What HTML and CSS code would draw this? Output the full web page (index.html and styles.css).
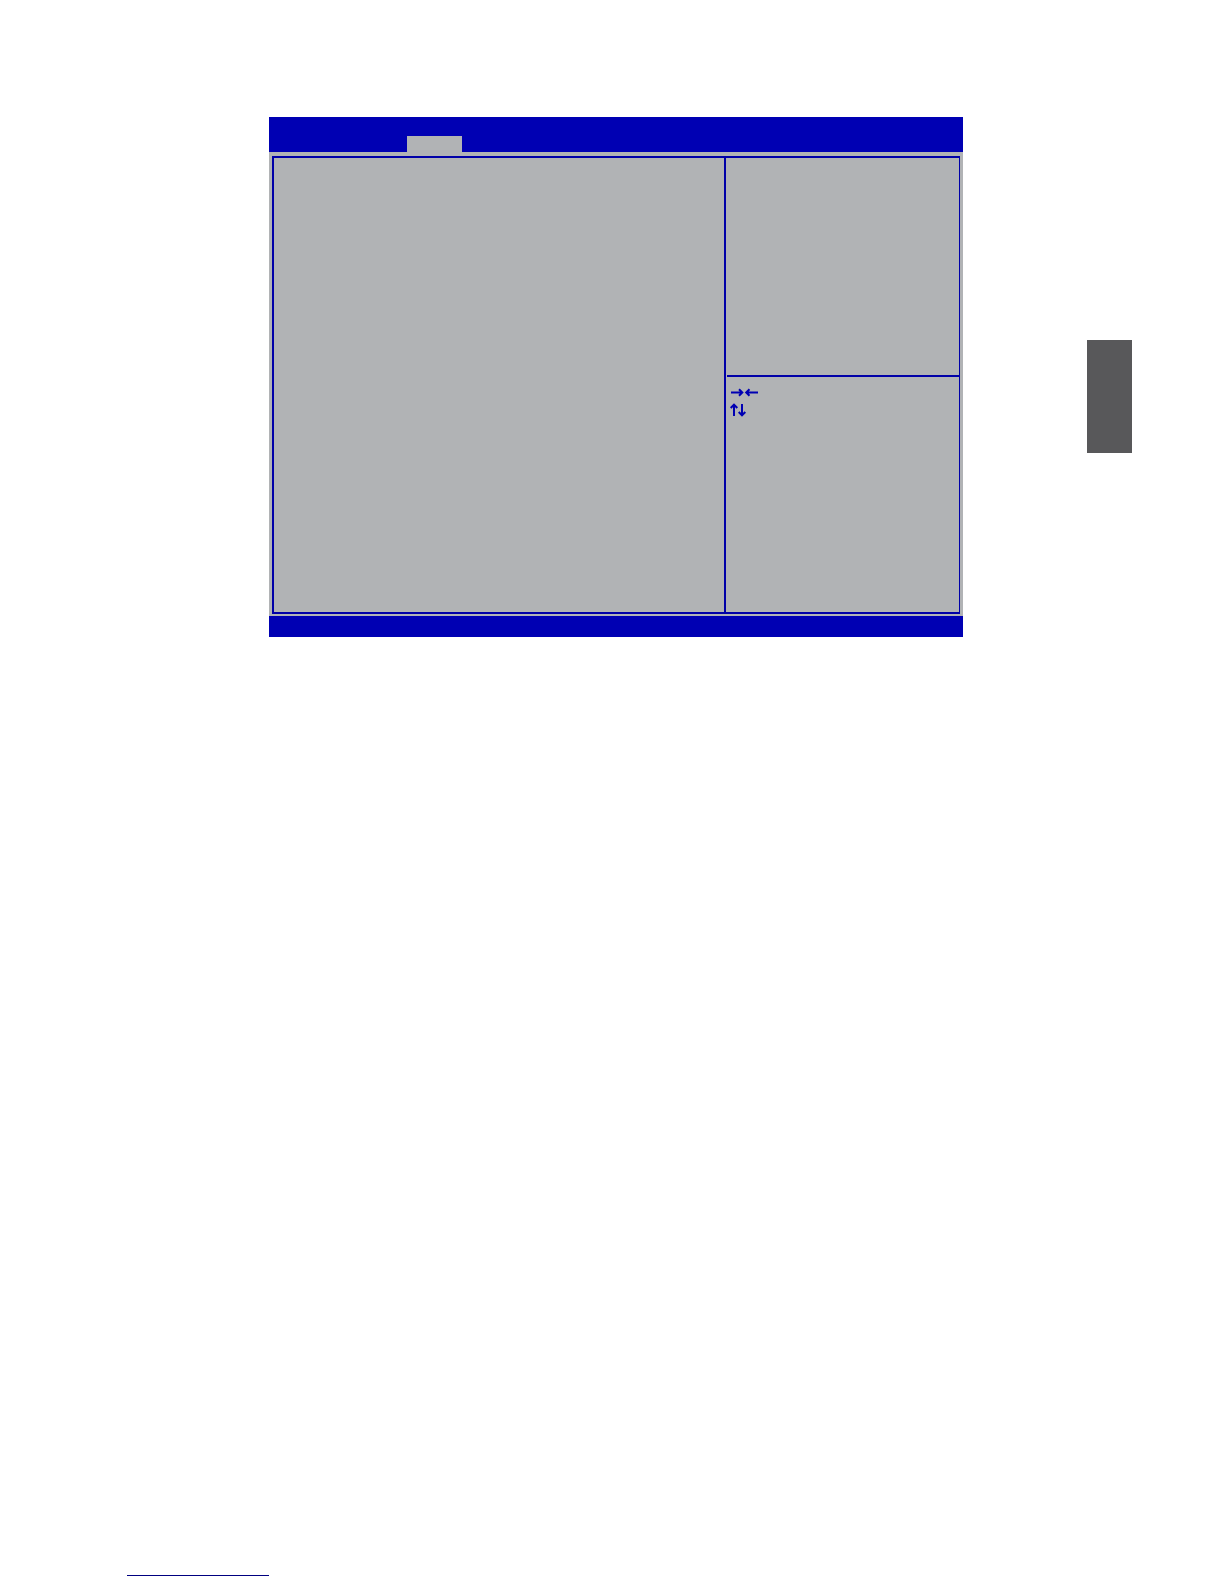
FILE: index.html
```html
<!DOCTYPE html>
<html lang="en">
<head>
<meta charset="utf-8">
<meta name="viewport" content="width=device-width, initial-scale=1">
<title>Setup</title>
<link rel="stylesheet" href="styles.css">
</head>
<body>
<main class="sheet">
  <section class="setup">
    <header class="setup-header"><div class="active-tab"></div></header>
    <div class="setup-body">
      <div class="frame">
        <div class="options"></div>
        <aside class="side">
          <div class="help"></div>
          <div class="keys">
            <svg class="arrows" width="28" height="30" viewBox="0 0 28 30" aria-hidden="true">
              <path d="M0 5.500H11M8 2.200L11.300 5.500L8 8.800M27 5.500H16M18.500 2.200L15.200 5.500L18.500 8.800M3 29V18M-0.300 21L3 17.700L6.300 21M11 17V28M7.700 25L11 28.300L14.300 25"/>
            </svg>
          </div>
        </aside>
      </div>
    </div>
    <footer class="setup-footer"></footer>
  </section>
  <div class="thumb-tab"></div>
</main>
<footer class="sheet-footer"><div class="rule"></div></footer>
</body>
</html>
```
FILE: styles.css
```css
* {
  box-sizing: border-box;
}

body {
  display: flex;
  flex-direction: column;
  min-height: 100vh;
  margin: 0;
  background: #fff;
  font-family: "Liberation Sans", sans-serif;
}

.sheet {
  display: grid;
  grid-template-columns: minmax(0, 1fr) 45px;
  column-gap: 124px;
  align-items: start;
  padding: 117px 92px 0 269px;
}

.setup {
  background: #b1b3b5;
}

.setup-header {
  display: flex;
  align-items: flex-end;
  height: 35px;
  padding-left: 138px;
  background: #0000b3;
}

.active-tab {
  width: 55px;
  height: 16px;
  background: #b1b3b5;
}

.setup-body {
  padding: 4px 3px 2px;
}

.frame {
  display: grid;
  grid-template-columns: minmax(0, 1fr) 235px;
  min-height: 458px;
  border: 2px solid #0000a8;
  border-right-width: 1px;
}

.side {
  display: grid;
  grid-template-rows: 219px 1fr;
  padding-left: 1px;
  border-left: 2px solid #0000a8;
}

.help {
  border-bottom: 2px solid #0000a8;
}

.keys {
  padding: 10px 4px;
}

.arrows {
  display: block;
  overflow: visible;
  fill: none;
  stroke: #0000b3;
  stroke-width: 2;
}

.setup-footer {
  height: 21px;
  background: #0000b3;
}

.thumb-tab {
  height: 113px;
  margin-top: 223px;
  background: #58585a;
}

.sheet-footer {
  margin-top: auto;
  padding: 0 0 8px 127px;
}

.rule {
  width: 142px;
  height: 1px;
  background: #000080;
}
```
